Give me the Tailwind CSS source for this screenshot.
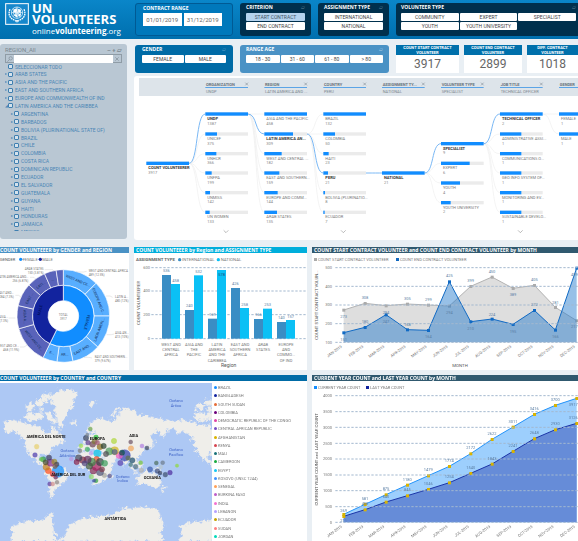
<!DOCTYPE html>
<html lang="en">
<head>
<meta charset="utf-8">
<meta name="viewport" content="width=device-width, initial-scale=1">
<title>UN Volunteers dashboard</title>
<script src="https://cdn.jsdelivr.net/npm/@tailwindcss/browser@4"></script>
</head>
<body class="min-h-screen overflow-x-hidden bg-[#e9eff4] font-['Roboto','Open_Sans',sans-serif] text-[5px] leading-[6px] text-[#555]">

<header class="grid h-[39px] grid-cols-[128px_98fr_71fr_71fr_182fr] gap-[7px] bg-linear-to-b from-[#0a86c9] to-[#006fae] pt-[3px] pb-[5px]">
  <div class="flex gap-[3px] pl-[5px] text-white">
    <svg class="h-[22px] w-[24px] shrink-0" viewBox="0 0 72 66" fill="none" stroke="#fff" aria-label="United Nations emblem">
      <rect x="2" y="2" width="68" height="62" fill="#1688cc" stroke-width="3"/>
      <g stroke-width="2">
        <circle cx="36" cy="29" r="17"/><circle cx="36" cy="29" r="11"/><circle cx="36" cy="29" r="5"/>
        <path d="M36 12v34M19 29h34M24 17l24 24M48 17L24 41"/>
      </g>
      <path d="M26 20l8-4 3 7-6 6-6-3zM40 17l8 5-3 8-6-5zM28 33l8 2 1 8-7-3zM41 32l7 1-3 8-5-2z" fill="#fff" stroke="none"/>
      <path d="M15 19c-6 13-2 26 12 32 5 2 10 3 13 6M57 19c6 13 2 26-12 32-5 2-10 3-13 6" stroke-width="4" stroke-dasharray="5 2"/>
    </svg>
    <div class="font-['Open_Sans']">
      <p class="text-[13px] leading-[11px] font-bold">UN<br>VOLUNTEERS</p>
      <p class="pt-[1px] text-[8px] leading-[10px]">online<b>volunteering</b>.org</p>
    </div>
  </div>
  <fieldset class="min-w-0 rounded-[3px] border border-[#005a94] bg-[#0078bb] px-[7px] pt-[1px]">
    <p class="font-['Open_Sans'] font-bold text-white">CONTRACT RANGE</p>
    <div class="mt-[2px] grid grid-cols-2 gap-[2px] pr-[3px]">
      <input aria-label="Start date" value="01/01/2019" class="h-[13px] w-full min-w-0 bg-white text-center text-[6px] text-[#666]">
      <input aria-label="End date" value="31/12/2019" class="h-[13px] w-full min-w-0 bg-white text-center text-[6px] text-[#666]">
    </div>
  </fieldset>
  <section class="rounded-[3px] bg-[#00304d] px-[6px] pt-[1px]">
    <h2 class="flex justify-between font-['Open_Sans'] font-bold text-white">CRITERION <span class="font-normal text-[#5f8299]">▱</span></h2>
    <div class="mt-[3px] grid gap-[1px]">
      <button class="h-[8px] rounded-[1px] bg-[#b5d3ee] text-[#456]">START CONTRACT</button>
      <button class="h-[8px] rounded-[1px] bg-white text-[#444]">END CONTRACT</button>
    </div>
  </section>
  <section class="rounded-[3px] bg-[#00304d] px-[6px] pt-[1px]">
    <h2 class="flex justify-between font-['Open_Sans'] font-bold text-white">ASSIGNMENT TYPE <span class="font-normal text-[#5f8299]">▱</span></h2>
    <div class="mt-[3px] grid gap-[1px]">
      <button class="h-[8px] rounded-[1px] bg-white text-[#444]">INTERNATIONAL</button>
      <button class="h-[8px] rounded-[1px] bg-white text-[#444]">NATIONAL</button>
    </div>
  </section>
  <section class="rounded-l-[3px] bg-[#00304d] pt-[1px] pr-[2px] pl-[5px]">
    <h2 class="flex justify-between font-['Open_Sans'] font-bold text-white">VOLUNTEER TYPE <span class="font-normal text-[#5f8299]">▱</span></h2>
    <div class="mt-[3px] grid grid-cols-3 gap-[1px]">
      <button class="h-[8px] rounded-[1px] bg-white text-[#444]">COMMUNITY</button>
      <button class="h-[8px] rounded-[1px] bg-white text-[#444]">EXPERT</button>
      <button class="h-[8px] rounded-[1px] bg-white text-[#444]">SPECIALIST</button>
      <button class="h-[8px] rounded-[1px] bg-white text-[#444]">YOUTH</button>
      <button class="h-[8px] rounded-[1px] bg-white text-[#444]">YOUTH UNIVERSITY</button>
    </div>
  </section>
</header>

<main>
  <div class="grid grid-cols-[minmax(0,127fr)_minmax(0,444fr)] gap-[7px] pt-[5px]">
    <aside class="h-[195px] rounded-[3px] bg-[#b9c7d3] px-[5px] pt-[3px] text-[#4a86b5]">
      <div class="flex justify-between text-[6px] text-[#7b8790]"><h2>REGION_All</h2><span class="font-bold">– + ▱</span></div>
      <div class="mt-[1px] flex h-[9px] items-center border border-[#8f9ca6]">
        <svg class="h-[6px] w-[8px]" viewBox="0 0 24 18" fill="none" stroke="#7f8b95" stroke-width="2"><circle cx="14" cy="7" r="5"/><path d="M10 11l-6 6"/></svg>
        <input aria-label="Search region" class="h-[8px] w-full min-w-0 flex-1 bg-white">
        <svg class="h-[6px] w-[8px]" viewBox="0 0 24 18" stroke="#7f8b95" stroke-width="2"><path d="M7 4l10 10M17 4L7 14"/></svg>
      </div>
      <div class="h-[168px] overflow-hidden"><ul id="regions" class="flex h-[173px] flex-col justify-between"></ul></div>
    </aside>

    <div class="flex flex-col gap-[5px] pt-[1px]">
      <div class="grid h-[26px] grid-cols-[98fr_149fr_182fr] gap-[7px] pl-[1px]">
        <section class="rounded-[3px] bg-[#006ba6] px-[7px] pt-[1px]">
          <h2 class="flex justify-between font-['Open_Sans'] font-bold text-white">GENDER <span class="font-normal text-[#5fa0c8]">▱</span></h2>
          <div class="mt-[3px] grid grid-cols-2 gap-[1px]">
            <button class="h-[8px] rounded-[1px] bg-white text-[#444]">FEMALE</button>
            <button class="h-[8px] rounded-[1px] bg-white text-[#444]">MALE</button>
          </div>
        </section>
        <section class="rounded-[3px] bg-[#4a92c5] px-[6px] pt-[1px]">
          <h2 class="flex justify-between font-['Open_Sans'] font-bold text-white">RANGE AGE <span class="font-normal text-[#a5cbe6]">▱</span></h2>
          <div class="mt-[3px] grid grid-cols-4 gap-[1px]">
            <button class="h-[8px] rounded-[1px] bg-white text-[#444]">18 - 30</button>
            <button class="h-[8px] rounded-[1px] bg-white text-[#444]">31 - 60</button>
            <button class="h-[8px] rounded-[1px] bg-white text-[#444]">61 - 80</button>
            <button class="h-[8px] rounded-[1px] bg-white text-[#444]">&gt; 80</button>
          </div>
        </section>
        <div class="grid grid-cols-[minmax(0,63fr)_minmax(0,58fr)_minmax(0,51fr)] gap-[5px] text-center">
          <section class="bg-white"><h2 class="bg-[#0070ab] text-[4px] leading-[5px] font-bold whitespace-nowrap text-white">COUNT START CONTRACT<br>VOLUNTEER</h2><p class="text-[12px] leading-[18px] text-[#666]">3917</p></section>
          <section class="bg-white"><h2 class="bg-[#0070ab] text-[4px] leading-[5px] font-bold whitespace-nowrap text-white">COUNT END CONTRACT<br>VOLUNTEER</h2><p class="text-[12px] leading-[18px] text-[#666]">2899</p></section>
          <section class="bg-white"><h2 class="bg-[#0070ab] text-[4px] leading-[5px] font-bold whitespace-nowrap text-white">DIFF. CONTRACT<br>VOLUNTEER</h2><p class="text-[12px] leading-[18px] text-[#666]">1018</p></section>
        </div>
      </div>
      <section class="rounded-l-[3px] bg-white"><svg id="tree" class="block w-full" viewBox="6 6 1332 492" aria-label="Volunteer breakdown"></svg></section>
    </div>
  </div>

  <div class="mt-[7px] grid grid-cols-[minmax(0,129fr)_minmax(0,173fr)_minmax(0,266fr)] gap-[5px]">
    <section class="bg-white">
      <h2 class="h-[6px] bg-[#4a92c5] font-['Open_Sans'] font-bold whitespace-nowrap text-white">COUNT VOLUNTEEER by GENDER and REGION</h2>
      <svg id="donut" class="block w-full" viewBox="0 27 387 351"></svg>
    </section>
    <section class="bg-white">
      <h2 class="h-[6px] bg-[#00aedb] pl-[2px] font-['Open_Sans'] font-bold whitespace-nowrap text-white">COUNT VOLUNTEEER by Region and ASSIGNMENT TYPE</h2>
      <svg id="bars" class="block w-full" viewBox="6 27 519 351"></svg>
    </section>
    <section class="bg-white">
      <h2 class="h-[6px] bg-[#30596f] pl-[2px] font-['Open_Sans'] font-bold whitespace-nowrap text-white">COUNT START CONTRACT VOLUNTEER and COUNT END CONTRACT VOLUNTEER by MONTH</h2>
      <svg id="line" class="block w-full" viewBox="6 27 798 351"></svg>
    </section>
    <section class="col-span-2 bg-white">
      <h2 class="h-[6px] bg-[#006ba6] font-['Open_Sans'] font-bold whitespace-nowrap text-white">COUNT VOLUNTEEER by COUNTRY and COUNTRY</h2>
      <div class="grid grid-cols-[minmax(0,212fr)_minmax(0,95fr)] pt-[2px]">
        <svg id="map" class="block w-full" viewBox="0 33 636 474">
          <defs>
            <filter id="coast" x="-5%" y="-5%" width="110%" height="110%" color-interpolation-filters="sRGB"><feTurbulence type="fractalNoise" baseFrequency="0.09" numOctaves="3" seed="4"/><feDisplacementMap in="SourceGraphic" scale="24" xChannelSelector="R" yChannelSelector="G"/></filter>
            <g id="america">
              <path d="M14 150L40 143 70 150 95 160 118 160 130 172 138 188 150 180 152 165 165 165 172 180 185 190 195 208 182 213 168 218 158 228 150 238 144 254 136 246 120 246 113 255 122 264 134 268 140 278 152 272 175 280 195 292 208 303 200 322 185 335 174 346 163 355 160 375 152 378 147 350 146 325 138 308 132 290 118 276 100 263 88 245 76 225 72 205 58 188 44 178 24 185 14 170z"/>
              <path d="M72 132l16-12 18 4 20-4 6 14-14 12-20 2-18-6zM76 100l18-8 14 10-12 12-16 0zM108 86l14-8 12 12-10 14-14-4zM126 70l18-6 8 8-12 18-10-4zM134 118l16 6 16 18 2 14-14-2-16-18zM116 106l14 2-4 10-12-2z"/>
              <path d="M28 510L40 480 30 465 60 452 95 447 130 443 150 425 160 418 156 440 162 480 180 510z"/>
            </g>
          </defs>
          <rect y="33" width="636" height="474" fill="#adc8f4"/>
          <g fill="#efeeea" filter="url(#coast)">
            <use href="#america"/><use href="#america" x="508"/>
            <path d="M148 72L172 58 205 50 232 62 224 82 216 105 202 128 190 150 184 174 174 164 168 138 164 106 152 88zM208 148l16-2 4 8-12 6zM264 92l14-8 10 8-14 14z"/>
            <path d="M238 236L240 222 256 218 252 206 264 196 272 184 284 186 290 180 278 178 266 182 262 168 274 152 290 140 308 140 320 150 336 146 350 142 356 118 382 106 404 118 412 130 440 130 480 140 520 150 530 162 514 174 498 176 490 194 480 190 476 178 460 182 452 194 458 210 446 224 436 226 428 238 422 252 410 260 412 274 402 282 396 270 388 262 380 268 374 284 362 262 350 256 342 270 326 282 314 262 306 246 292 236 284 236 276 228 262 228 252 240zM250 196l8-10 6 12-8 8zM332 132l20-28 6 4-18 28zM446 222l10-10 6-12 4 10-8 14-10 6z"/>
            <path d="M226 252L244 241 270 238 284 248 300 248 316 262 324 276 342 278 334 296 322 308 318 320 306 330 288 340 278 332 272 308 266 292 258 284 240 286 228 274zM328 304l8-4-2 16-8 4z"/>
            <path d="M410 318L424 308 438 298 452 300 460 308 466 298 474 314 486 332 474 348 456 346 440 336 414 340zM388 276l20 20-6 4-18-20zM410 280l18-6-2 18-14 2zM404 300l20 2v4l-20-2zM456 286l24 6 8 10-14-2zM494 338l6 6-14 16-6-2z"/>
            <path d="M176 510L200 480 206 462 230 447 270 433 300 433 340 427 360 412 400 408 440 405 475 412 482 440 494 460 482 480 492 510z"/>
          </g>
        </svg>
        <ul id="countries" class="flex flex-col justify-between py-[2px] pl-[2px] text-[4px] leading-[5px] text-[#777]"></ul>
      </div>
    </section>
    <section class="bg-white">
      <h2 class="h-[6px] bg-[#30596f] pl-[2px] font-['Open_Sans'] font-bold whitespace-nowrap text-white">CURRENT YEAR COUNT and LAST YEAR COUNT by MONTH</h2>
      <svg id="growth" class="block w-full" viewBox="6 27 798 480"></svg>
    </section>
  </div>
</main>

<script>
const $ = id => document.getElementById(id);
const add = (id, s) => $(id).insertAdjacentHTML('beforeend', s);
// Text centred vertically on y
const T = (x, y, s, o = {}) => `<text x="${x}" y="${y + 4}" font-size="${o.z || 12}" fill="${o.f || '#777'}" text-anchor="${o.a || 'start'}" font-weight="${o.b ? 700 : 400}" ${o.r ? `transform="rotate(${o.r} ${x} ${y})"` : ''}>${s}</text>`;
const R = (x, y, w, h, f) => `<rect x="${x}" y="${y}" width="${w}" height="${h}" fill="${f}"/>`;
const grid = (y, x1, x2) => `<path d="M${x1} ${y}H${x2}" stroke="#a3b8cf" stroke-width="3" stroke-dasharray="7 5"/>`;

// Region filter
['SELECCIONAR TODO','ARAB STATES','ASIA AND THE PACIFIC','EAST AND SOUTHERN AFRICA','EUROPE AND COMMONWEALTH OF IND','LATIN AMERICA AND THE CARIBBEA','ARGENTINA','BARBADOS','BOLIVIA (PLURINATIONAL STATE OF)','BRAZIL','CHILE','COLOMBIA','COSTA RICA','DOMINICAN REPUBLIC','ECUADOR','EL SALVADOR','GUATEMALA','GUYANA','HAITI','HONDURAS','JAMAICA','MEXICO'].forEach((n, i) =>
  add('regions', `<li class="${i > 5 ? 'pl-[6px]' : ''}"><label class="flex h-[7px] items-center whitespace-nowrap"><span class="w-[3px] shrink-0 text-[4px]">${i == 0 ? '' : i == 5 ? '◢' : '▸'}</span><input type="checkbox" class="mr-[2px] h-[5px] w-[5px] shrink-0 appearance-none rounded-[1px] border border-solid border-[#3f7fb0] bg-[#d5e2ec]">${n}</label></li>`));

// Decomposition tree
const cols = [[220,'ORGANIZATION','UNDP'],[397,'REGION','LATIN AMERICA AND ...'],[574,'COUNTRY','PERU'],[750,'ASSIGNMENT TY...','NATIONAL'],[927,'VOLUNTEER TYPE','SPECIALIST'],[1104,'JOB TITLE','TECHNICAL OFFICER'],[1281,'GENDER','']];
let t = R(21, 12, 1317, 54, '#dde4ea');
cols.forEach(([x, a, b]) => { t += T(x + 2, 31, a, {b: 1, f: '#67727b'}) + R(x, 39, 128, 3, '#5ba4e6') + T(x + 2, 52, b, {f: '#7c868e'}) + `<path d="M${x+120} 26l8 8m0-8l-8 8" stroke="#87919a" stroke-width="2"/>`; });
const link = (x, y1, y2, on) => `<path d="M${x} ${y1}C${x+28} ${y1} ${x+20} ${y2} ${x+49} ${y2}" fill="none" stroke="${on ? '#7ab8f5' : '#efefef'}" stroke-width="${on ? 3 : 2}"/>`;
const levels = [
  [43, [[268,'COUNT VOLUNTEERER',3917,128,1]]],
  [220, [[120,'UNDP',1387,128,1],[180,'UNICEF',375,35],[239,'UNHCR',366,33],[297,'UNFPA',199,19],[356,'UNMISS',142,14],[415,'UN WOMEN',133,13]]],
  [397, [[120,'ASIA AND THE PACIFIC',458,128],[180,'LATIN AMERICA AN...',309,86,1],[239,'WEST AND CENTRAL ...',182,52],[297,'EAST AND SOUTHERN...',159,45],[356,'EUROPE AND COMM...',144,40],[415,'ARAB STATES',135,38]]],
  [574, [[120,'BRAZIL',132,128],[180,'COLOMBIA',50,35],[239,'HAITI',23,16],[297,'PERU',21,14,1],[356,'BOLIVIA (PLURINATIO...',8,5],[415,'ECUADOR',7,4]]],
  [750, [[297,'NATIONAL',21,128,1]]],
  [927, [[209,'SPECIALIST',9,128,1],[268,'EXPERT',6,86],[327,'YOUTH',4,57],[386,'YOUTH UNIVERSITY',2,29]]],
  [1104, [[120,'TECHNICAL OFFICER',2,128,1],[180,'ADMINISTRATIVE ASSI...',1,64],[239,'COMMUNICATIONS O...',1,64],[297,'GEO INFO SYSTEM OF...',1,64],[356,'MONITORING AND EV...',1,64],[415,'SUSTAINABLE DEVELO...',1,64]]],
  [1281, [[120,'FEMALE',1,128],[180,'MALE',1,128]]]];
levels.forEach(([x, items], i) => {
  if (i) { const from = levels[i-1][1].find(r => r[4]); [...items].sort((a, b) => (a[4]||0) - (b[4]||0)).forEach(r => t += link(levels[i-1][0] + 128, from[0], r[0], r[4])); }
});
levels.forEach(([x, items]) => items.forEach(([y, n, v, w, on]) => t += R(x, y-5, 128, 10, '#ebebeb') + R(x, y-5, w, 10, '#118dff') + T(x+6, y+14, n, {b: on, f: on ? '#333' : '#777'}) + T(x+6, y+28, v, {f: '#888'})));
[282, 634, 1165].forEach(x => t += `<path d="M${x-7} 469l7 7 7-7" fill="none" stroke="#999" stroke-width="2"/>`);
add('tree', t);

// Sunburst
const P = (r, a) => { a = a * Math.PI / 180; return (190 + r*Math.sin(a)).toFixed(1) + ' ' + (216 - r*Math.cos(a)).toFixed(1); };
const arc = (r1, r2, a, b, f) => { const l = b-a > 180 ? 1 : 0; return `<path d="M${P(r2,a)}A${r2} ${r2} 0 ${l} 1 ${P(r2,b)}L${P(r1,b)}A${r1} ${r1} 0 ${l} 0 ${P(r1,a)}z" fill="${f}" stroke="#fff" stroke-width="2"/>`; };
let d = T(0, 46, 'GENDER', {f: '#555'}) + '<circle cx="62" cy="46" r="5" fill="#118dff"/>' + T(68, 46, 'FEMALE') + '<circle cx="121" cy="46" r="5" fill="#12239e"/>' + T(127, 46, 'MALE');
const cuts = [0,45,90,132,168,188,206,254,283,312,336,351,360];
const names = ['WEST AND CE...','EUROPE AND C...','LATIN AMERI...','EAST AND...','AR...','E...','WEST AND CE...','ASIA A...','EAST ...','LATI...','...',''];
for (let i = 0; i < 12; i++) d += arc(92, 139, cuts[i], cuts[i+1], i < 6 ? '#58aeff' : '#5963ba');
d += arc(46, 92, 0, 206, '#118dff') + arc(46, 92, 206, 360, '#12239e');
for (let i = 0; i < 11; i++) {
  const m = (cuts[i] + cuts[i+1]) / 2, [x, y] = P(115, m).split(' ').map(Number);
  d += T(x, y, names[i], {a: 'middle', z: 11, f: '#14305e', r: m > 90 && m < 270 ? m + 180 : m});
}
d += T(261, 235, 'FEMALE', {a: 'middle', f: '#0a2a66', r: 103}) + T(120, 198, 'MALE', {a: 'middle', f: '#000d50', r: 283});
d += T(190, 212, 'TOTAL', {a: 'middle', z: 9}) + T(190, 225, '3917', {a: 'middle', z: 9});
[[131,75,'ARAB STATES','150 (3.81%)','end'],[85,99,'LATIN AMERICA AND...','256 (6.81%)','end'],[41,147,'EAST AND...','284 (7.3%)','end'],[24,219,'ASIA...','(7.3%)','end'],[57,305,'WEST AND CE...','468 (11.9%)','end'],[266,80,'WEST AND CENTRAL AFRICA','489 (12.5%)','start'],[345,159,'LATIN A...','480 (12%)','start'],[345,267,'ASIA AN...','413 (10%)','start'],[284,339,'EAST AND SOUTHERN...','379 (9.67%)','start']].forEach(([x,y,a,b,k]) => d += T(x, y, a, {a: k, z: 9}) + T(x, y + 11, b, {a: k, z: 9}));
d += '<path d="M134 77h24l4 6M90 100h12l6 6M46 154h10l8 6M26 222h20M60 309h12l10-6M228 84h22l10-2M318 156h12l8 4M320 272h14l8-2M252 340h14l10 2" fill="none" stroke="#bbb"/>';
add('donut', d);

// Grouped bars
let b = T(12, 47, 'ASSIGNMENT TYPE', {b: 1, f: '#666', z: 13}) + '<circle cx="143" cy="47" r="5" fill="#3a8dc4"/>' + T(150, 47, 'INTERNATIONAL', {z: 13}) + '<circle cx="259" cy="47" r="5" fill="#0bc0f5"/>' + T(266, 47, 'NATIONAL', {z: 13});
[[600,71],[400,141],[200,212],[0,284]].forEach(([v, y]) => b += grid(y, 58, 524) + T(54, y, v, {a: 'end'}));
[[93,120,536,458,['WEST AND','CENTRAL','AFRICA']],[198,94,240,532,['ASIA AND','THE','PACIFIC']],[224,78,169,578,['LATIN','AMERICA','AND THE','CARIBBEA']],[132,192,426,258,['EAST AND','SOUTHERN','AFRICA']],[225,194,166,253,['ARAB','STATES']],[234,228,140,157,['EUROPE','AND','COMMO...','OF IND']]].forEach(([y1,y2,v1,v2,n], i) => {
  const x = 90 + 69*i;
  b += R(x, y1, 27, 284-y1, '#3a8dc4') + R(x+27, y2, 27, 284-y2, '#0bc0f5') + T(x+13, i == 0 ? 80 : y1-12, v1, {a: 'middle', f: '#5b7fa5'}) + T(x+41, i == 2 ? 91 : y2-11, v2, {a: 'middle', f: i == 2 ? '#17507c' : '#5b7fa5'});
  n.forEach((s, k) => b += T(x+27, 301+16*k, s, {a: 'middle'}));
});
b += T(290, 366, 'Region', {a: 'middle', f: '#555', z: 15}) + T(20, 177, 'COUNT VOLUNTEERER', {a: 'middle', r: -90, f: '#555', z: 13});
add('bars', b);

// Area charts
const xs = [101,165,228,292,355,418,482,546,609,673,736,800];
const months = ['JAN','FEB','MAR','APR','MAY','JUN','JUL','AUG','SEP','OCT','NOV','DEC'];
const area = (ys, base, fill, stroke, mark, w) => {
  const p = ys.map((y, i) => xs[i] + ' ' + y).join('L');
  return `<path d="M${xs[0]} ${base}L${p}V${base}z" fill="${fill}"/><path d="M${p}" fill="none" stroke="${stroke}" stroke-width="${w}"/>` + ys.map((y, i) => R(xs[i]-4, y-4, 9, 9, mark)).join('');
};
const labels = (vals, ys) => vals.map((v, i) => T(i == 11 ? 803 : xs[i], ys[i], v, {a: i == 11 ? 'end' : 'middle', f: '#5b7fa5'})).join('');
const axis = y => months.map((m, i) => T(xs[i]-6, y, m + '-2019', {a: 'end', r: -36})).join('');
const g1 = [[500,71],[400,127],[300,183],[200,239],[100,295]];
add('line', R(12,42,9,9,'#aaa') + T(24, 47, 'COUNT START CONTRACT VOLUNTEER') + R(258,42,9,9,'#1068c0') + T(270, 47, 'COUNT END CONTRACT VOLUNTEER')
  + area([198,178,185,180,183,186,127,99,133,124,190,230], 295, '#dedede', '#b3b3b3', '#ababab', 3)
  + area([266,250,212,257,259,113,233,225,241,199,258,72], 295, '#2078cc77', '#116ac4', '#116ac4', 3)
  + g1.map(([v, y]) => grid(y, 76, 804) + T(66, y, v, {a: 'end'})).join('')
  + labels([273,308,294,305,299,294,399,450,389,405,281,217], [218,160,205,165,167,206,110,84,152,108,177,247])
  + labels([151,180,247,168,164,425,210,224,195,272,166,499], [286,232,232,243,278,95,254,212,263,182,278,91])
  + axis(306) + T(450, 365, 'MONTH', {a: 'middle', f: '#555', z: 13}) + T(19, 183, 'COUNT START CONTRACT VOLUN...', {a: 'middle', r: -90, f: '#555', z: 13}));
let gg = '';
for (let i = 0; i < 9; i++) { const y = Math.round(71 + 47.5*i); gg += grid(y, 76, 804) + T(66, y, 4000 - 500*i, {a: 'end'}); }
add('growth', R(12,42,9,9,'#118dff') + T(24, 47, 'CURRENT YEAR COUNT') + R(168,42,9,9,'#12239e') + T(180, 47, 'LAST YEAR COUNT')
  + area([427,397,368,339,311,283,245,202,165,127,100,79], 451, '#9dcffd', '#2293fa', '#d9b300', 3)
  + area([433,413,390,371,352,332,304,276,238,200,173,154], 451, '#668cd8', '#1c35a8', '#d9b300', 3) + gg
  + labels([269,581,875,1180,1479,1774,2172,2622,3011,3416,3700,3917], [415,380,351,323,293,266,227,184,149,110,83,98])
  + labels([211,400,640,845,1046,1254,1540,1843,2241,2648,2930,3126], [447,396,374,353,335,314,287,260,220,183,155,137])
  + axis(462) + T(19, 262, 'CURRENT YEAR COUNT and LAST YEAR COUNT', {a: 'middle', r: -90, f: '#555', z: 13}));

// Map bubbles: x, y, radius, colour
const dots = [[174,298,18,'#118dff'],[374,250,17,'#3040b0'],[292,244,11,'#10c8e8'],[110,224,7,'#e8d070'],[105,249,7,'#5040b0'],[271,171,6,'#70a850'],[393,229,8,'#f0a860'],[426,222,6,'#b080e0'],[441,228,6,'#404860'],[392,210,6,'#705868'],[531,281,5,'#90d840'],[510,302,7,'#5030a0'],[496,308,7,'#405070'],[472,297,7,'#405080'],[450,292,8,'#4060b0'],[424,295,7,'#b0b0b0'],[422,272,6,'#80c840'],[407,284,7,'#507080'],[397,265,8,'#205070'],[361,273,8,'#6048b0'],[358,250,10,'#f060c0'],[366,242,8,'#105048'],[344,236,12,'#d0b828'],[328,238,11,'#50a060'],[342,207,8,'#b0d840'],[469,273,6,'#507060'],[488,272,6,'#708090'],[482,285,6,'#b8c8d0'],[480,303,6,'#304060'],[149,336,6,'#5838a0'],[171,331,6,'#908888'],[158,336,6,'#d09090'],[167,316,6,'#703060'],[158,306,8,'#e04040'],[145,296,9,'#ff5020'],[139,285,10,'#c08020'],[152,272,11,'#883090'],[163,269,8,'#a09030'],[170,277,7,'#404050'],[130,262,8,'#309850'],[137,271,8,'#505030'],[147,257,8,'#404060'],[124,262,6,'#70c850'],[165,283,7,'#806050'],[329,312,6,'#605888'],[313,310,7,'#a8a8a0'],[288,326,6,'#30a040'],[282,326,5,'#4050a0'],[274,314,7,'#90d870'],[300,300,11,'#505878'],[280,296,10,'#803058'],[289,282,14,'#a82060'],[290,261,8,'#f05030'],[300,270,11,'#384848'],[275,270,12,'#40884a'],[263,263,11,'#603060'],[248,264,10,'#80304a'],[236,258,10,'#404860'],[230,270,8,'#802050'],[214,261,6,'#b898e0'],[240,236,6,'#808080'],[262,232,7,'#40b060'],[273,244,6,'#b8a0f0'],[243,221,6,'#a0e050'],[278,217,9,'#704858'],[264,212,7,'#604090'],[258,198,8,'#304060'],[288,196,7,'#20c030'],[262,188,5,'#808890'],[300,224,9,'#907020'],[311,222,8,'#304838'],[318,246,8,'#505058'],[314,274,9,'#40a060'],[306,292,8,'#804050'],[268,282,10,'#405840'],[254,274,8,'#504880'],[344,240,8,'#506090'],[384,258,7,'#607050'],[392,278,6,'#508080'],[284,208,8,'#807838'],[292,212,7,'#a05878']];
let m = '';
[[528,86,'Océano'],[528,100,'Ártico'],[202,237,'Océano'],[202,250,'Atlántico'],[528,234,'Océano'],[528,247,'Pacífico'],[368,313,'Océano'],[368,326,'Índico']].forEach(([x,y,s]) => m += T(x, y, s, {a: 'middle', f: '#4065c8', z: 12}));
dots.forEach(([x,y,r,c]) => m += `<circle cx="${x}" cy="${y}" r="${r}" fill="${c}" fill-opacity=".72" stroke="${c}"/>`);
[[138,195,'AMÉRICA DEL NORTE'],[292,200,'EUROPA'],[401,190,'ASIA'],[205,307,'AMÉRICA DEL SUR'],[457,316,'OCEANÍA'],[346,441,'ANTÁRTIDA']].forEach(([x,y,s]) => m += T(x, y, s, {a: 'middle', f: '#111', b: 1}));
add('map', m);

[['BRAZIL','#118dff'],['BANGLADESH','#12239e'],['SOUTH SUDAN','#e66c37'],['COLOMBIA','#6b007b'],['DEMOCRATIC REPUBLIC OF THE CONGO','#e044a7'],['CENTRAL AFRICAN REPUBLIC','#744ec2'],['AFGHANISTAN','#d9b300'],['KENYA','#d64550'],['MALI','#197278'],['CAMEROON','#1aab40'],['EGYPT','#15c6f4'],['KOSOVO (UNSC 1244)','#4092ff'],['SENEGAL','#ffa058'],['BURKINA FASO','#be5dc9'],['INDIA','#f472d0'],['LEBANON','#b5a1ff'],['ECUADOR','#c4a200'],['SUDAN','#ff8080'],['JORDAN','#00dbbc']].forEach(([n, c]) =>
  add('countries', `<li class="flex items-center gap-[1px] whitespace-nowrap"><svg class="h-[3px] w-[3px] shrink-0" viewBox="0 0 6 6"><circle cx="3" cy="3" r="3" fill="${c}"/></svg>${n}</li>`));
</script>
</body>
</html>
